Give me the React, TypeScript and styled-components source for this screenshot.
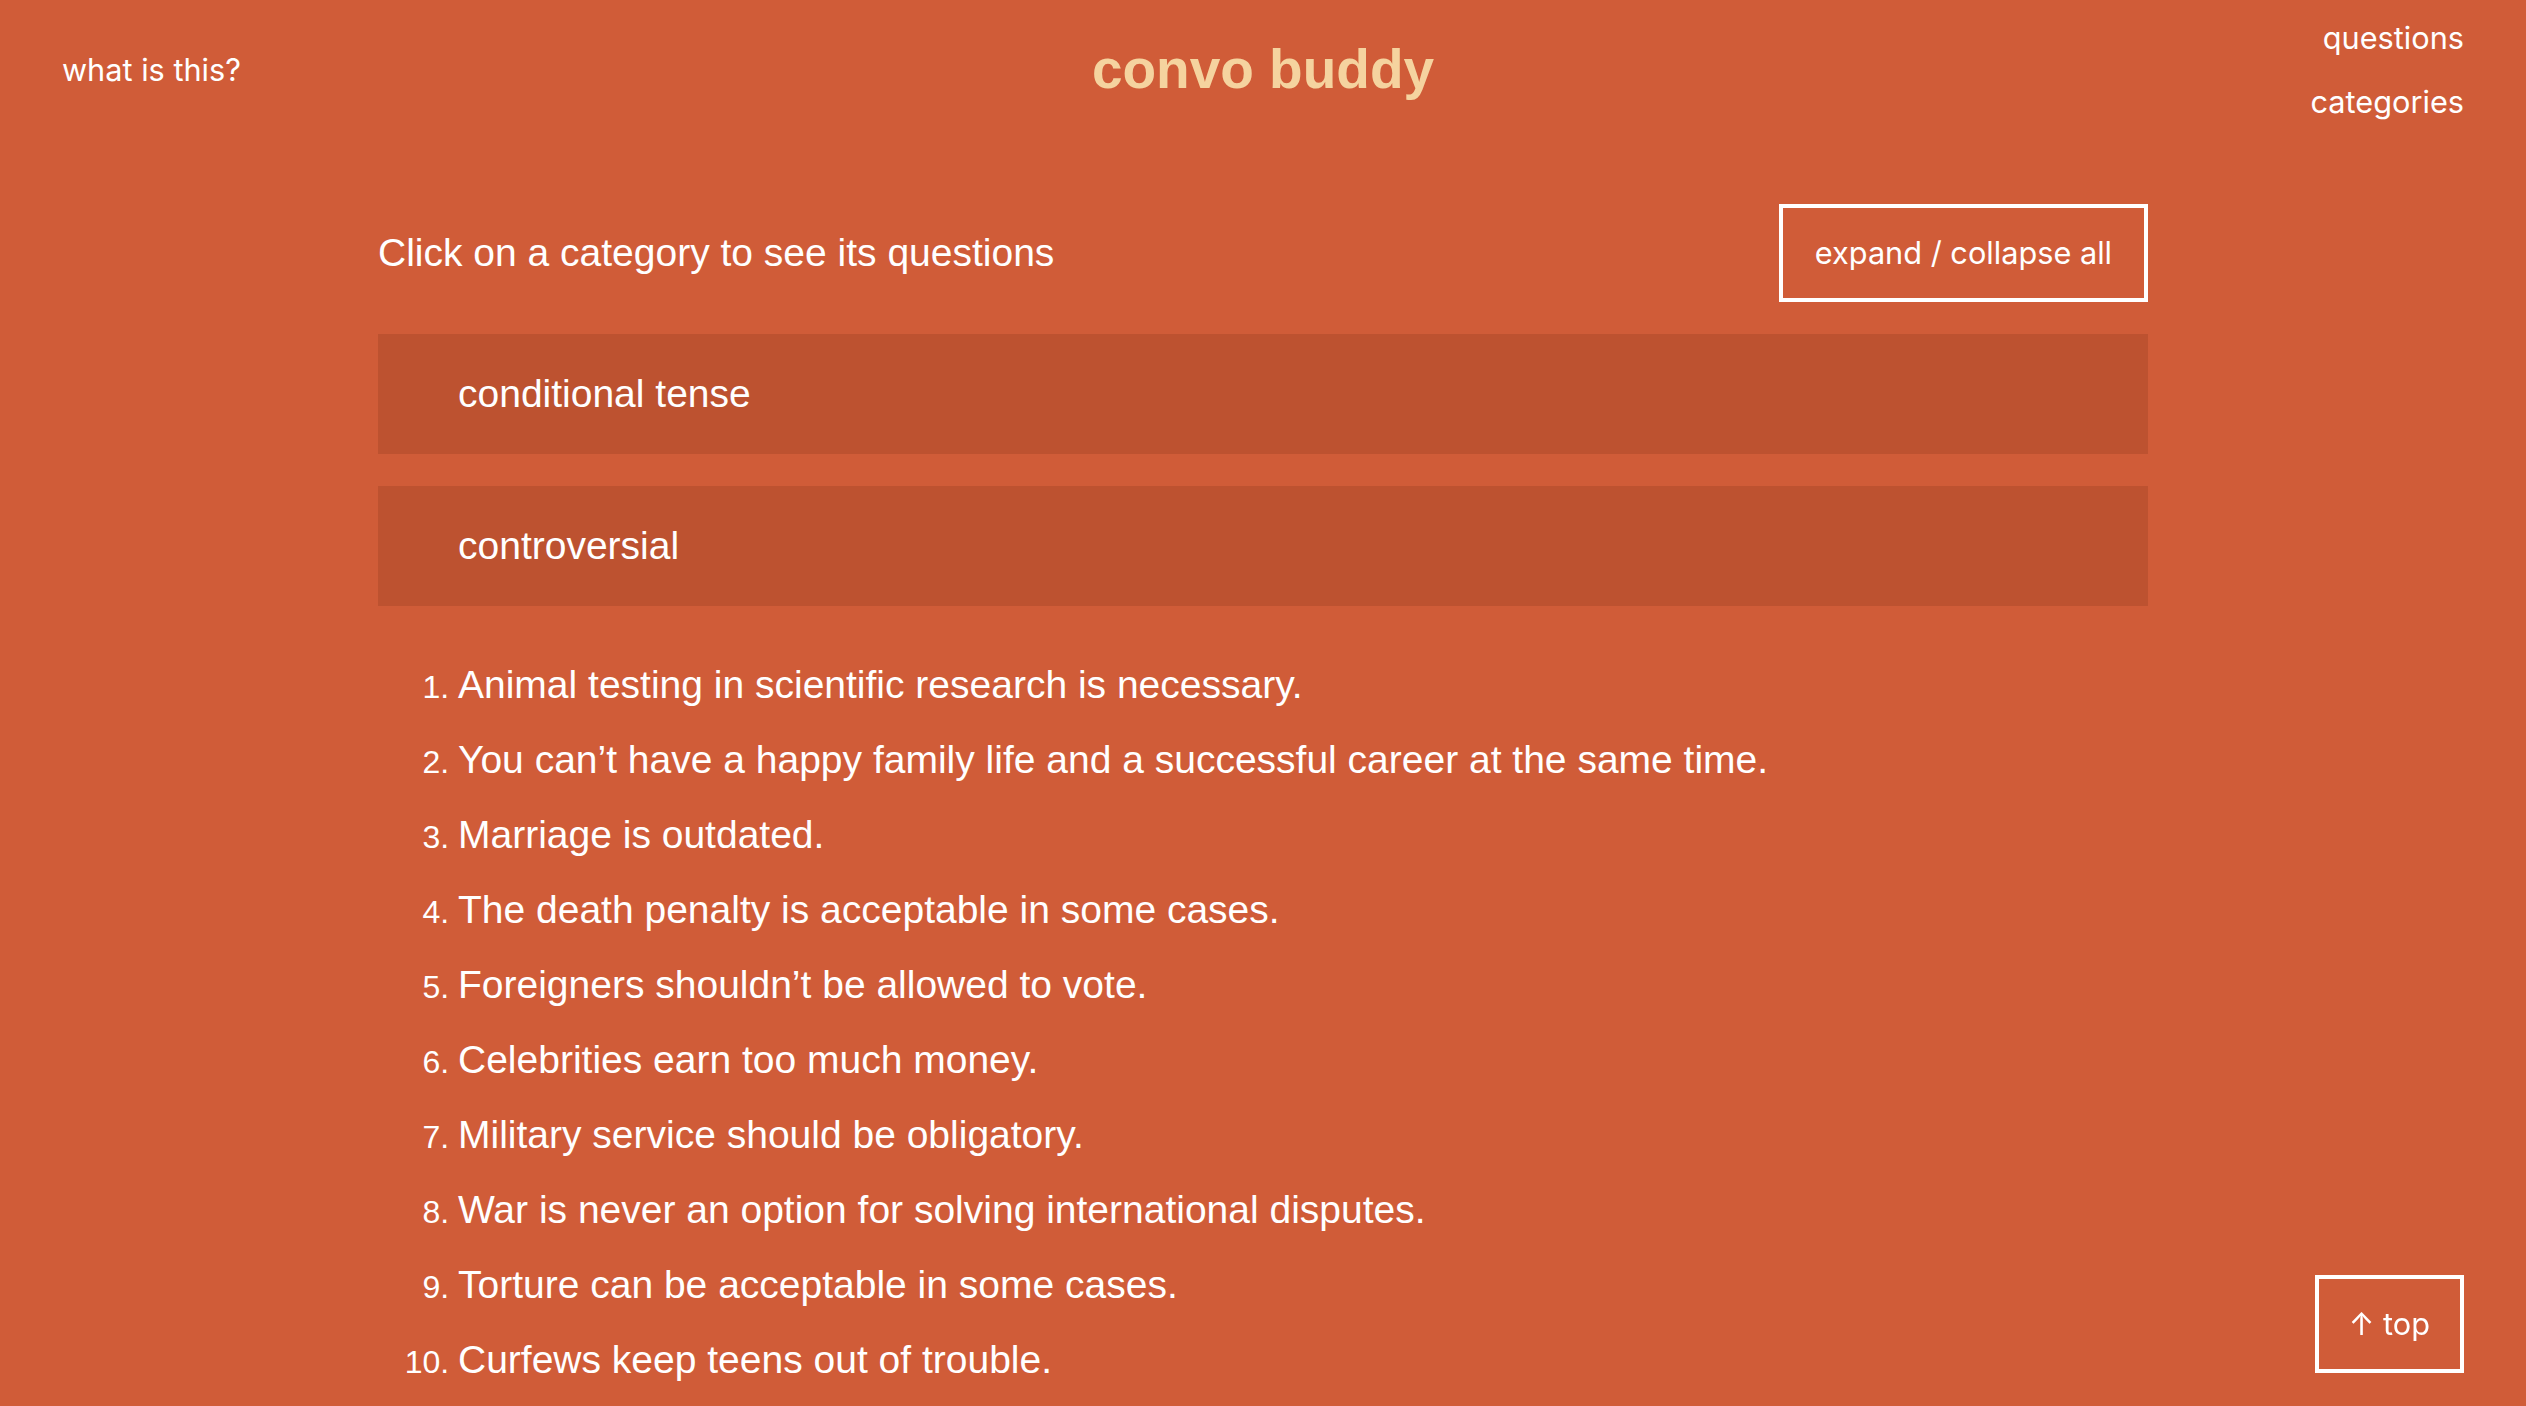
import React from "react";
import styled, { createGlobalStyle } from "styled-components";

const Global = createGlobalStyle`
  html, body {
    margin: 0;
    padding: 0;
    background: #d05c38;
  }
  body {
    color: #ffffff;
    font-family: "Liberation Sans", Arial, sans-serif;
  }
  * { box-sizing: border-box; }
`;

const Page = styled.div`
  min-height: 1406px;
  background: #d05c38;
`;

const Header = styled.header`
  display: grid;
  grid-template-columns: 1fr auto 1fr;
  align-items: center;
  padding: 5px 62px 0 62px;
`;

const PlainButton = styled.button`
  background: none;
  border: none;
  padding: 0;
  margin: 0;
  color: #ffffff;
  font-family: "Inter", "Liberation Sans", sans-serif;
  font-size: 30.7px;
  line-height: 37px;
  cursor: pointer;
`;

const LeftLink = styled(PlainButton)`
  justify-self: start;
`;

const Title = styled.h1`
  margin: 0;
  font-family: "Liberation Sans", Arial, sans-serif;
  font-weight: 700;
  font-size: 55px;
  color: #f5d39f;
  line-height: 61px;
`;

const Nav = styled.nav`
  justify-self: end;
  display: flex;
  flex-direction: column;
  align-items: flex-end;
`;

const NavLink = styled(PlainButton)`
  height: 64px;
`;

const Main = styled.main`
  width: 1770px;
  margin: 71px auto 0 auto;
  padding-bottom: 40px;
`;

const IntroRow = styled.div`
  display: flex;
  align-items: center;
  justify-content: space-between;
  margin-bottom: 32px;
`;

const Intro = styled.p`
  margin: 0;
  font-size: 39px;
`;

const OutlineButton = styled.button<{ $padX?: number }>`
  background: transparent;
  border: 4px solid #ffffff;
  color: #ffffff;
  font-family: "Inter", "Liberation Sans", sans-serif;
  font-size: 30.7px;
  line-height: 38px;
  padding: 26px ${(p) => p.$padX ?? 32}px;
  cursor: pointer;
`;

const Categories = styled.div`
  display: flex;
  flex-direction: column;
  gap: 32px;
`;

const CategoryBar = styled.div`
  height: 120px;
  display: flex;
  align-items: center;
  padding-left: 80px;
  background: #bd5230;
  font-size: 39px;
`;

const QuestionList = styled.ol`
  margin: 41px 0 0 0;
  padding-left: 80px;
`;

const Question = styled.li`
  font-size: 39px;
  line-height: 75px;

  &::marker {
    font-size: 32px;
  }
`;

const TopButton = styled(OutlineButton)`
  position: fixed;
  right: 62px;
  bottom: 33px;
`;

const questions = [
  "Animal testing in scientific research is necessary.",
  "You can\u2019t have a happy family life and a successful career at the same time.",
  "Marriage is outdated.",
  "The death penalty is acceptable in some cases.",
  "Foreigners shouldn\u2019t be allowed to vote.",
  "Celebrities earn too much money.",
  "Military service should be obligatory.",
  "War is never an option for solving international disputes.",
  "Torture can be acceptable in some cases.",
  "Curfews keep teens out of trouble.",
];

export default function App() {
  return (
    <Page>
      <Global />
      <Header>
        <LeftLink>what is this?</LeftLink>
        <Title>convo buddy</Title>
        <Nav>
          <NavLink>questions</NavLink>
          <NavLink>categories</NavLink>
        </Nav>
      </Header>
      <Main>
        <IntroRow>
          <Intro>Click on a category to see its questions</Intro>
          <OutlineButton>expand / collapse all</OutlineButton>
        </IntroRow>
        <Categories>
          <CategoryBar>conditional tense</CategoryBar>
          <CategoryBar>controversial</CategoryBar>
        </Categories>
        <QuestionList>
          {questions.map((q) => (
            <Question key={q}>{q}</Question>
          ))}
        </QuestionList>
      </Main>
      <TopButton $padX={30}>↑ top</TopButton>
    </Page>
  );
}
